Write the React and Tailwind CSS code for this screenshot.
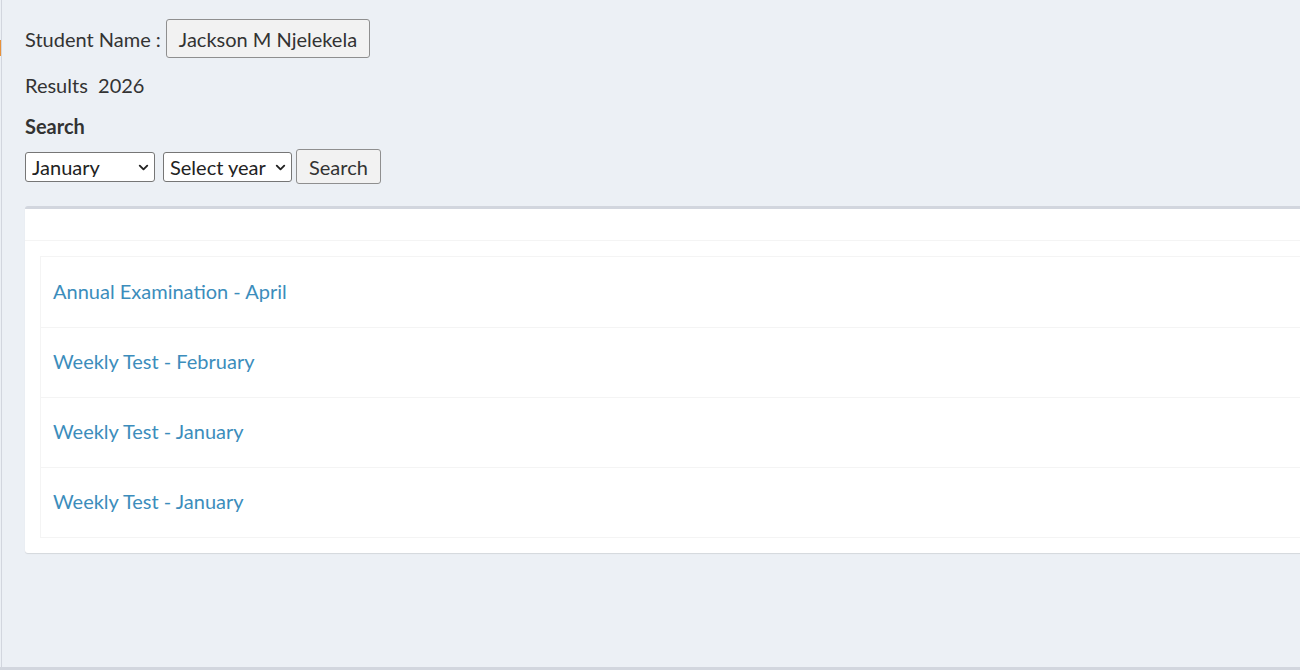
import { ChevronDown } from "lucide-react";

const results = [
  "Annual Examination - April",
  "Weekly Test - February",
  "Weekly Test - January",
  "Weekly Test - January",
];

function SelectBox({ label, width }) {
  return (
    <div className={`relative h-[30px] ${width}`}>
      <select className="h-full w-full appearance-none rounded-[3px] border border-[#767676] bg-white pl-[6px] pr-6 text-[20px] leading-none text-[#222]">
        <option>{label}</option>
      </select>
      <ChevronDown
        className="pointer-events-none absolute right-[4px] top-[8px] h-[15px] w-[15px] text-[#222]"
        strokeWidth={3}
      />
    </div>
  );
}

export default function App() {
  return (
    <div
      className="relative h-[670px] overflow-hidden bg-[#ecf0f5] text-[#333]"
      style={{ fontFamily: "Lato, 'Open Sans', sans-serif" }}
    >
      {/* sidebar edge */}
      <div className="absolute left-0 top-[40px] h-[16px] w-px bg-[#e8913a]" />
      <div className="absolute left-px top-0 h-full w-px bg-[#d2d6de]" />

      <div className="pl-[25px] pt-[19px]">
        <div className="flex items-center gap-[5px] text-[20px]">
          <span>Student Name :</span>
          <span className="flex h-[39px] items-center rounded-[3px] border border-[#8f8f8f] bg-[#f2f2f2] px-[12px]">
            Jackson M Njelekela
          </span>
        </div>

        <div className="mt-[13px] text-[20px] leading-[28px]">Results&nbsp; 2026</div>

        <div className="mt-[13px] text-[20px] font-bold leading-[28px]">Search</div>

        <div className="mt-[9px] flex items-center">
          <SelectBox label="January" width="w-[130px]" />
          <div className="w-[8px]" />
          <SelectBox label="Select year" width="w-[129px]" />
          <button className="ml-[4px] h-[35px] rounded-[3px] border border-[#8f8f8f] bg-[#f2f2f2] px-[12px] text-[20px]">
            Search
          </button>
        </div>

        {/* results card */}
        <div className="mt-[22px] w-[1320px] rounded-[3px] border-t-[3px] border-[#d2d6de] bg-white shadow-[0_1px_1px_rgba(0,0,0,0.1)]">
          <div className="h-[32px] border-b border-[#f4f4f4]" />
          <div className="p-[15px]">
            <div className="border border-[#f4f4f4]">
              {results.map((r, i) => (
                <div
                  key={i}
                  className={`flex h-[70px] items-center px-[12px] pb-[3px] text-[20px] text-[#3c8dbc] ${
                    i > 0 ? "border-t border-[#f4f4f4]" : ""
                  }`}
                >
                  {r}
                </div>
              ))}
            </div>
          </div>
        </div>
      </div>

      <div className="absolute bottom-0 left-0 h-[3px] w-full bg-[#d2d6de]" />
    </div>
  );
}
